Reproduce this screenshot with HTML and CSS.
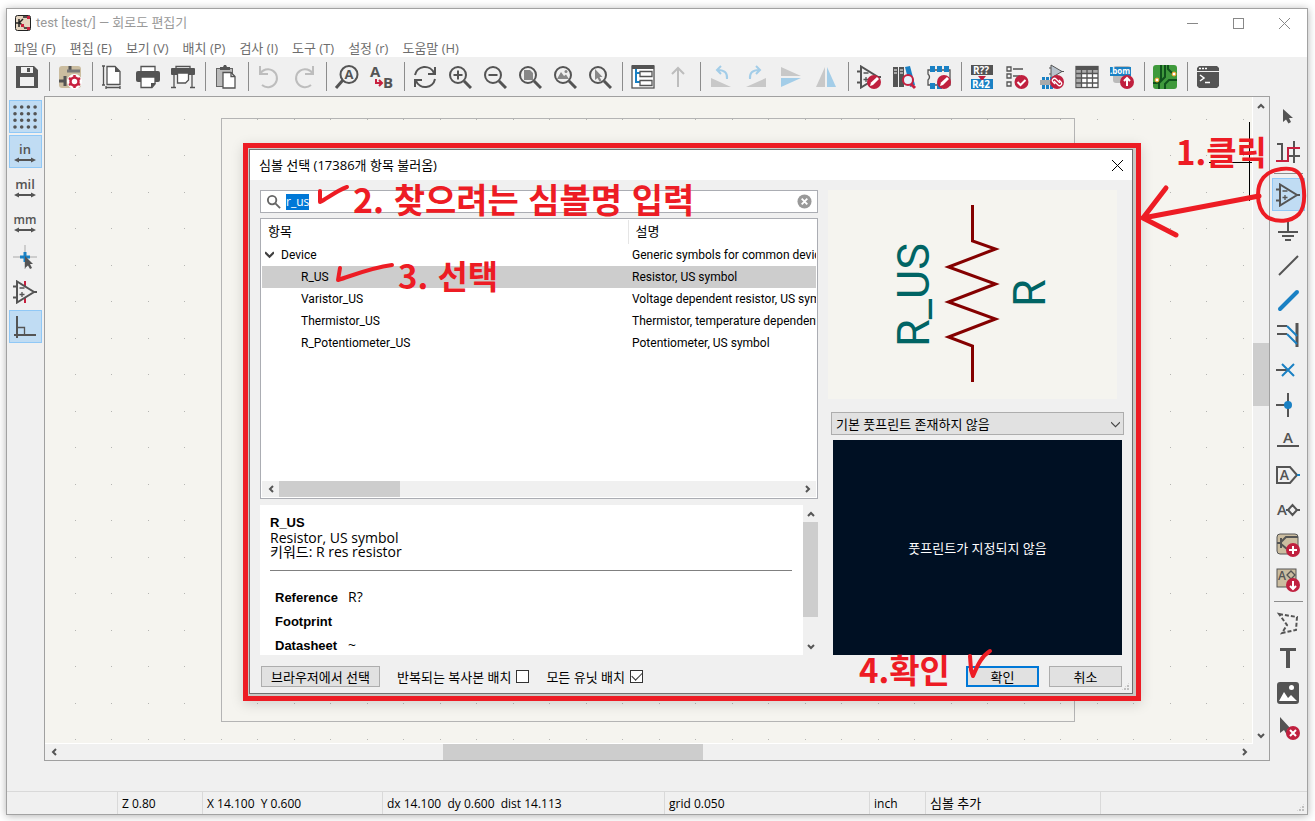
FILE: index.html
```html
<!DOCTYPE html>
<html lang="ko">
<head>
    <meta charset="UTF-8">
    <meta name="viewport" content="width=device-width, initial-scale=1.0">
    <title>test [test/] — 회로도 편집기</title>
    <link rel="stylesheet" href="styles.css">
</head>
<body>
    <!-- shared icon shapes -->
    <svg class="sprite" aria-hidden="true">
        <symbol id="lens" viewBox="0 0 24 24">
            <circle class="s2" cx="10" cy="10" r="8"/>
            <path class="s3" d="M16 16l7 7"/>
        </symbol>
        <symbol id="opamp" viewBox="0 0 24 24">
            <path class="s2" d="M4 1.5v21L21 12zM0 6.5h4M0 17.5h4M21 12h3"/>
            <path class="s1" d="M6.500 8h5M6.500 14.500h5M9 12v5"/>
        </symbol>
        <symbol id="units" viewBox="0 0 24 24">
            <path class="s2" d="M4 20h16"/>
            <path class="f" d="M1 20l5-2.500v5zM23 20l-5-2.500v5z"/>
        </symbol>
        <symbol id="pencil" viewBox="0 0 24 24">
            <circle class="red" cx="17" cy="17" r="7"/>
            <path fill="#fff" d="M13 21l1-3.500 6-5.500 2 2-6 6z"/>
        </symbol>
    </svg>

    <div class="window">
        <header class="titlebar">
            <svg class="app-icon" viewBox="0 0 16 16"><rect x=".5" y=".5" width="15" height="15" rx="2" fill="#e5d5c0" stroke="#222"/><path d="M4 4v8M1 8h3M4 8l4-4M5 8l4 4M8 2h5M9 13h4" stroke="#222" stroke-width="1.500" fill="none"/><path d="M12 1h3v3h-3zM12 12h3v3h-3zM6 9h3v3H6z" fill="#c8203f"/></svg>
            <span class="title">test [test/] — 회로도 편집기</span>
            <button class="win-btn" aria-label="최소화"><svg viewBox="0 0 11 11"><path d="M0 5.500h11"/></svg></button>
            <button class="win-btn" aria-label="최대화"><svg viewBox="0 0 11 11"><rect x=".5" y=".5" width="10" height="10"/></svg></button>
            <button class="win-btn" aria-label="닫기"><svg viewBox="0 0 11 11"><path d="M0 0l11 11M11 0L0 11"/></svg></button>
        </header>

        <nav class="menubar">
            <a href="#">파일 (F)</a>
            <a href="#">편집 (E)</a>
            <a href="#">보기 (V)</a>
            <a href="#">배치 (P)</a>
            <a href="#">검사 (I)</a>
            <a href="#">도구 (T)</a>
            <a href="#">설정 (r)</a>
            <a href="#">도움말 (H)</a>
        </nav>

        <div class="toolbar top">
            <button aria-label="저장"><svg viewBox="0 0 24 24"><path class="f" fill-rule="evenodd" d="M1 1h18l4 4v18H1zM6 2v6h12V2zM5 12v9h14v-9z"/><path class="f" d="M12 3h3v4h-3z"/></svg></button>
            <hr>
            <button aria-label="회로도 설정"><svg viewBox="0 0 24 24"><rect x="1" y="1" width="22" height="22" rx="3" fill="#cbbda0"/><path class="s3" d="M1 16h6M7 11v10M12 1v5"/><path d="M9 6h13" stroke="#777" stroke-width="3"/><circle cx="16.500" cy="16.500" r="5" fill="#fff" stroke="#fff" stroke-width="5"/><circle cx="16.500" cy="16.500" r="4" fill="none" stroke="#c8203f" stroke-width="2.500"/><path d="M16.500 10v3M16.500 20v3M11 13l2.500 2M19.500 18.500l2.500 1.500M11 20l2.500-1.500M19.500 15l2.500-2" stroke="#c8203f" stroke-width="2.500"/></svg></button>
            <hr>
            <button aria-label="페이지 설정"><svg viewBox="0 0 24 24"><path class="s1" d="M1 1h3M1 20h3M2.500 1v19M5 21v3M19 21v3M5 22.500h14"/><path class="s1 w" d="M6 1.500h8l5 5v13H6z"/><path class="f" d="M14 1v6h5z"/></svg></button>
            <button aria-label="인쇄"><svg viewBox="0 0 24 24"><path class="s1 w" d="M5 6V1.500h14V6"/><rect class="f" y="6" width="24" height="11" rx="2"/><path class="s1 w" d="M5 12h14v7l-3 3.500H5z"/><path class="f" d="M20 18l-5 5v-5z"/></svg></button>
            <button aria-label="플로팅"><svg viewBox="0 0 24 24"><path class="s1 w" d="M5 3V1.500h14V4"/><rect class="f" y="3" width="24" height="7" rx="1"/><path class="s1 w" d="M6.500 8h11v7l-3 3h-8z"/><path class="s1" d="M3 10v13M21 10v13M0 22.500h5M19 22.500h5"/></svg></button>
            <hr>
            <button aria-label="붙여넣기"><svg viewBox="0 0 24 24"><rect x="2.500" y="3.500" width="16" height="18" fill="#bbb" stroke="#666"/><path class="f" d="M6 2h3l1-2h2l1 2h3v3H6z"/><path class="s1 w" d="M9 7.500h8l4 4V23H9z"/><path class="s1" d="M17 7v4.500h4"/></svg></button>
            <hr>
            <button aria-label="실행 취소" disabled><svg viewBox="0 0 24 24"><path class="dim" d="M3 1v8h8M3 9a9 9 0 1 1 2 11"/></svg></button>
            <button aria-label="다시 실행" disabled><svg viewBox="0 0 24 24"><path class="dim" d="M21 1v8h-8M21 9a9 9 0 1 0-2 11"/></svg></button>
            <hr>
            <button aria-label="찾기"><svg viewBox="0 0 24 24"><circle class="s2" cx="14" cy="9.500" r="8.500"/><path class="s3" d="M8 15l-7 8"/><text x="9.500" y="14" class="ico-b" font-size="13">A</text></svg></button>
            <button aria-label="찾아 바꾸기"><svg viewBox="0 0 24 24"><text x="0" y="12" class="ico-b" font-size="15">A</text><text x="13" y="23" class="ico-b" font-size="15">B</text><path d="M6 14v4h6M9 15l3 3-3 3" fill="none" stroke="#c8203f" stroke-width="2"/></svg></button>
            <hr>
            <button aria-label="새로 고침"><svg viewBox="0 0 24 24"><path class="s2" d="M2 10a10 10 0 0 1 19-2M22 2v7h-7M22 14a10 10 0 0 1-19 2M2 22v-7h7"/></svg></button>
            <button aria-label="확대"><svg viewBox="0 0 24 24"><use href="#lens"/><path class="s2" d="M10 5.500v9M5.500 10h9"/></svg></button>
            <button aria-label="축소"><svg viewBox="0 0 24 24"><use href="#lens"/><path class="s2" d="M5.500 10h9"/></svg></button>
            <button aria-label="화면 맞춤"><svg viewBox="0 0 24 24"><use href="#lens"/><path fill="#888" d="M6 5h6l3 3v7H6z"/></svg></button>
            <button aria-label="개체 맞춤"><svg viewBox="0 0 24 24"><use href="#lens"/><path fill="#888" d="M4 14l4-7 3 4 2-1.500 3 4.500z"/><circle fill="#888" cx="13" cy="6.500" r="1.500"/></svg></button>
            <button aria-label="선택 영역 확대"><svg viewBox="0 0 24 24"><use href="#lens"/><path fill="#888" d="M7 4v11l2.500-2 2 3.500 2-1-2-3.500h3z"/></svg></button>
            <hr>
            <button aria-label="계층 탐색기"><svg viewBox="0 0 24 24"><rect class="s1 w" x="1" y="1" width="22" height="22"/><path class="f" d="M1 0h22v4H1z"/><path d="M5 4v13h4M5 8h4" fill="none" stroke="#1a81c4" stroke-width="2"/><path class="s1" d="M9 6.500h12v5H9zM9 15.500h12v5H9z"/></svg></button>
            <button aria-label="상위 시트" disabled><svg viewBox="0 0 24 24"><path class="dim" d="M12 22V3M6 9l6-6 6 6"/></svg></button>
            <hr>
            <button aria-label="반시계 방향 회전" disabled><svg viewBox="0 0 24 24"><path fill="#c8c8c8" d="M2 13v9h20z"/><path d="M18 14q1-9-9-9M12 1L8 5l4 4" fill="none" stroke="#a3cde8" stroke-width="2"/></svg></button>
            <button aria-label="시계 방향 회전" disabled><svg viewBox="0 0 24 24"><path fill="#c8c8c8" d="M22 13v9H2z"/><path d="M6 14Q5 5 15 5M12 1l4 4-4 4" fill="none" stroke="#a3cde8" stroke-width="2"/></svg></button>
            <button aria-label="상하 반전" disabled><svg viewBox="0 0 24 24"><path fill="#c8c8c8" d="M2 2v9h20z"/><path fill="#a3cde8" d="M2 22v-9h20z"/></svg></button>
            <button aria-label="좌우 반전" disabled><svg viewBox="0 0 24 24"><path fill="#c8c8c8" d="M2 22h9V2z"/><path fill="#a3cde8" d="M22 22h-9V2z"/></svg></button>
            <hr>
            <button aria-label="심볼 편집기"><svg viewBox="0 0 24 24"><use href="#opamp"/><use href="#pencil"/></svg></button>
            <button aria-label="심볼 탐색"><svg viewBox="0 0 24 24"><path class="f" d="M1 2h5v20H1zM7 2h5v20H7z"/><path d="M2 5h3M2 8h3M8 5h3M8 8h3" stroke="#fff"/><path d="M13 2l5-1 5 19-5 2z" fill="#1a81c4"/><circle cx="16" cy="15" r="5" fill="#e8f2fa" stroke="#c8203f" stroke-width="2"/><path d="M19 19l4 4" stroke="#c8203f" stroke-width="3"/></svg></button>
            <button aria-label="풋프린트 편집기"><svg viewBox="0 0 24 24"><path class="s1" d="M1 5v4q3 3 0 6v5h22V5z"/><path fill="#1a81c4" d="M3 1h5v6H3zM10 1h5v6h-5zM17 1h5v6h-5zM3 18h5v6H3zM10 18h5v6h-5z"/><use href="#pencil"/></svg></button>
            <hr>
            <button aria-label="주석 달기"><svg viewBox="0 0 24 24"><path class="f" d="M1 0h22v10H1z"/><path fill="#1a81c4" d="M1 14h22v10H1z"/><path class="red" d="M8 11h8l-4 5z"/><text x="3" y="9" class="ico-b white" font-size="10">R??</text><text x="2" y="23" class="ico-b white" font-size="10">R42</text></svg></button>
            <button aria-label="전기 규칙 검사"><svg viewBox="0 0 24 24"><path class="s1" d="M2 2h4v4H2zM2 9h4v4H2zM2 17h4v4H2zM8 4h10M8 11h7"/><circle class="red" cx="16.500" cy="17" r="7"/><path d="M12.500 17l3 3 5-5" fill="none" stroke="#fff" stroke-width="2"/></svg></button>
            <button aria-label="풋프린트 할당"><svg viewBox="0 0 24 24"><path d="M11 0v13l11-6.500z" fill="#b8c2cc" stroke="#545454"/><path d="M9 3h2M9 9h2M21 6.500h3" stroke="#545454"/><path fill="#1a81c4" d="M2 12h3v12H2zM6 12h3v12H6zM10 12h3v12h-3z"/><path fill="#aaa" d="M0 15h14v5H0z"/><circle class="red" cx="17" cy="17" r="7"/><path d="M15 19l-2-2a2 2 0 0 1 3-3l4 4M19 15l2 2a2 2 0 0 1-3 3l-4-4" fill="none" stroke="#fff" stroke-width="1.200"/></svg></button>
            <button aria-label="심볼 필드 편집"><svg viewBox="0 0 24 24"><rect class="s1 w" x="1" y="1.500" width="22" height="21"/><path class="f" d="M1 1h22v4H1z"/><path fill="#aaa" d="M2 5h20v3H2zM2 8h4v14H2z"/><path class="s1" d="M6.500 4v19M12 4v19M17.500 4v19M1 8.500h22M1 13h22M1 18h22"/></svg></button>
            <button aria-label="BOM 생성"><svg viewBox="0 0 24 24"><rect x="3" y="1" width="18" height="17" rx="3" fill="#bbb"/><path fill="#1a81c4" d="M0 2h21v9H0z"/><text x="0" y="9" class="ico-b white" font-size="8">.bom</text><circle class="red" cx="17" cy="17" r="7"/><path d="M17 21v-7M14 16l3-3 3 3" fill="none" stroke="#fff" stroke-width="2"/></svg></button>
            <hr>
            <button aria-label="PCB 편집기"><svg viewBox="0 0 24 24"><rect width="24" height="24" rx="3" fill="#3f9a3c"/><path d="M0 18h4l4-4V0M6 24v-6l6-6V0M12 24v-5l4-4h8M15 0v4l5 5" fill="none" stroke="#10521c" stroke-width="2"/><circle cx="4" cy="15" r="2" fill="#fff" stroke="#f2a01e"/><circle cx="21" cy="9" r="2" fill="#fff" stroke="#f2a01e"/></svg></button>
            <hr>
            <button aria-label="스크립트 콘솔"><svg viewBox="0 0 24 24"><path class="f" d="M3 1h18l2 2v3H1V3zM1 7h22v14l-2 2H3l-2-2z"/><path d="M3 3.500h2M6 3.500h2M9 3.500h2" stroke="#fff" stroke-width="1.500"/><path d="M4 10l4 3-4 3M9 17.500h5" fill="none" stroke="#fff" stroke-width="1.500"/></svg></button>
        </div>

        <main class="workspace">
            <div class="toolbar side">
                <button class="active" aria-label="격자 표시"><svg viewBox="0 0 24 24"><path d="M2 2h21M2 8.700h21M2 15.300h21M2 22h21" stroke="#545454" stroke-width="3.600" stroke-linecap="round" stroke-dasharray="0 6.700"/></svg></button>
                <button class="active" aria-label="인치"><svg viewBox="0 0 24 24"><text x="12" y="14" text-anchor="middle" class="ico" font-size="13">in</text><use href="#units"/></svg></button>
                <button aria-label="밀"><svg viewBox="0 0 24 24"><text x="12" y="14" text-anchor="middle" class="ico" font-size="13">mil</text><use href="#units"/></svg></button>
                <button aria-label="밀리미터"><svg viewBox="0 0 24 24"><text x="12" y="14" text-anchor="middle" class="ico" font-size="12">mm</text><use href="#units"/></svg></button>
                <button aria-label="전체 십자선"><svg viewBox="0 0 24 24"><path d="M0 12h24M12 0v24" stroke="#aaa"/><path d="M7 12h10M12 7v10" stroke="#1a81c4" stroke-width="3"/><path class="f" d="M12 11v12l3-2.500 2 3.500 2-1-2-4h3z"/></svg></button>
                <button aria-label="숨겨진 핀"><svg viewBox="0 0 24 24"><path d="M12 1v5M12 18v5" stroke="#c8203f" stroke-width="2"/><use href="#opamp"/></svg></button>
                <button class="active" aria-label="직각 모드"><svg viewBox="0 0 24 24"><path class="s2" d="M4 1v22M1 20h22"/><path class="s1" d="M4 12.500h7.500V20"/></svg></button>
            </div>

            <div class="canvas-frame">
                <div class="canvas">
                    <svg class="sheet" width="100%" height="100%">
                        <defs>
                            <pattern id="grid" x="30" y="22" width="73" height="73" patternUnits="userSpaceOnUse">
                                <path d="M0 0h1v1H0zM36 0h1v1h-1zM0 36h1v1H0zM36 36h1v1h-1z" fill="#b5b5b2"/>
                            </pattern>
                        </defs>
                        <rect width="100%" height="100%" fill="url(#grid)"/>
                        <rect x="176.500" y="21.500" width="853" height="603" fill="none" stroke="#b4b4b4"/>
                        <path d="M1204.500 25v79M1164 65.500h43" stroke="#000"/>
                    </svg>
                </div>
                <div class="scroll vertical">
                    <button aria-label="위로"><svg viewBox="0 0 8 8"><path d="M1 6l3-3 3 3"/></svg></button>
                    <div class="track"><div class="thumb"></div></div>
                    <button aria-label="아래로"><svg viewBox="0 0 8 8"><path d="M1 2l3 3 3-3"/></svg></button>
                </div>
                <div class="scroll horizontal">
                    <button aria-label="왼쪽"><svg viewBox="0 0 8 8"><path d="M6 1L3 4l3 3"/></svg></button>
                    <div class="track"><div class="thumb"></div></div>
                    <button aria-label="오른쪽"><svg viewBox="0 0 8 8"><path d="M2 1l3 3-3 3"/></svg></button>
                </div>
            </div>

            <div class="toolbar side">
                <button aria-label="선택"><svg viewBox="0 0 24 24"><path class="f" d="M7 4v13l3-2.500 2.500 4 2.500-1.500-2-4h4z"/></svg></button>
                <button aria-label="네트 강조"><svg viewBox="0 0 24 24"><path class="s2" d="M1 4h5v17M12 16h12M18 1v22"/><path d="M0 21h12V8h12" fill="none" stroke="#c8203f" stroke-width="2"/></svg></button>
                <hr>
                <button class="active" aria-label="심볼 추가"><svg viewBox="0 0 24 24"><use href="#opamp"/></svg></button>
                <button aria-label="전원 추가"><svg viewBox="0 0 24 24"><path class="s2" d="M12 4v10M2 14h20M6 18h12M9 22h6"/></svg></button>
                <button aria-label="배선"><svg viewBox="0 0 24 24"><path class="s2" d="M3 22L22 3"/></svg></button>
                <button aria-label="버스"><svg viewBox="0 0 24 24"><path d="M4 21L21 4" stroke="#1a81c4" stroke-width="4" stroke-linecap="round"/></svg></button>
                <button aria-label="버스 입구"><svg viewBox="0 0 24 24"><path class="s2" d="M1 3h10M1 11h10"/><path class="s3" d="M21 0v24"/><path d="M11 3l10 10M11 11l10 10" stroke="#1a81c4" stroke-width="2"/></svg></button>
                <button aria-label="연결 없음"><svg viewBox="0 0 24 24"><path class="s2" d="M0 12h12"/><path d="M6 6l12 12M18 6L6 18" stroke="#1a81c4" stroke-width="2"/></svg></button>
                <button aria-label="접점"><svg viewBox="0 0 24 24"><path class="s2" d="M0 12h12M12 0v24"/><circle cx="12" cy="12" r="4" fill="#1a81c4"/></svg></button>
                <button aria-label="레이블"><svg viewBox="0 0 24 24"><text x="12" y="15" text-anchor="middle" class="ico" font-size="15">A</text><path class="s2" d="M1 18h22"/></svg></button>
                <button aria-label="전역 레이블"><svg viewBox="0 0 24 24"><path class="s2" d="M1 4h13l7 8-7 8H1z"/><path d="M21 12h3" stroke="#1a81c4" stroke-width="2"/><text x="8.500" y="17" text-anchor="middle" class="ico" font-size="14">A</text></svg></button>
                <button aria-label="계층 레이블"><svg viewBox="0 0 24 24"><text x="6" y="17" text-anchor="middle" class="ico" font-size="15">A</text><path class="s2" d="M12 12l4.500-5 4.500 5-4.500 5zM21 12h3M10 12h2"/></svg></button>
                <button aria-label="시트 추가"><svg viewBox="0 0 24 24"><rect x="1" y="1" width="21" height="20" rx="3" fill="#cbbda0" stroke="#545454"/><path class="s2" d="M1 10h4M5 5v10M5 9l5-5h12M5 11l6 5"/><circle class="red" cx="17" cy="17" r="7"/><path d="M17 13v8M13 17h8" stroke="#fff" stroke-width="2"/></svg></button>
                <button aria-label="시트 핀 가져오기"><svg viewBox="0 0 24 24"><rect x="1" y="1" width="19" height="18" fill="#cbbda0" stroke="#545454"/><text x="2" y="12" class="ico" font-size="12">A</text><path class="s1" d="M11 7l4-4 4 4-4 4z"/><circle class="red" cx="17" cy="17" r="7"/><path d="M17 13v7M14 18l3 3 3-3" fill="none" stroke="#fff" stroke-width="2"/></svg></button>
                <hr>
                <button aria-label="도형 선"><svg viewBox="0 0 24 24"><path d="M3 3l18 3-1 13-14 3 5-8z" fill="none" stroke="#545454" stroke-width="2" stroke-dasharray="4 2"/></svg></button>
                <button aria-label="텍스트"><svg viewBox="0 0 24 24"><path class="f" d="M4 2h16v3h-6v17h-4V5H4z"/></svg></button>
                <button aria-label="이미지"><svg viewBox="0 0 24 24"><rect class="f" x="1" y="1" width="22" height="22" rx="3"/><path fill="#fff" d="M3 20l5-9 4 6 3-3 6 6z"/><circle fill="#fff" cx="15.500" cy="6.500" r="2.500"/></svg></button>
                <button aria-label="삭제"><svg viewBox="0 0 24 24"><path class="f" d="M4 1v16l4-3 3 5 2-2-2-4h4z"/><circle class="red" cx="17" cy="17" r="7"/><path d="M14 14l6 6M20 14l-6 6" stroke="#fff" stroke-width="2"/></svg></button>
            </div>
        </main>

        <div class="message-panel"></div>

        <footer class="statusbar">
            <span class="f-blank"></span>
            <span class="f-zoom">Z 0.80</span>
            <span class="f-pos">X 14.100&nbsp; Y 0.600</span>
            <span class="f-delta">dx 14.100&nbsp; dy 0.600&nbsp; dist 14.113</span>
            <span class="f-grid">grid 0.050</span>
            <span class="f-unit">inch</span>
            <span class="f-tool">심볼 추가</span>
            <span class="f-rest"></span>
            <i class="grip"></i>
        </footer>
    </div>

    <div class="dialog-mark">
        <section class="dialog" role="dialog" aria-labelledby="dlg-title">
            <header class="dialog-title">
                <h1 id="dlg-title">심볼 선택 (17386개 항목 불러옴)</h1>
                <button aria-label="닫기"><svg viewBox="0 0 11 11"><path d="M0 0l11 11M11 0L0 11"/></svg></button>
            </header>

            <div class="dialog-body">
                <div class="left">
                    <div class="search">
                        <svg viewBox="0 0 16 16"><circle cx="6.500" cy="6.500" r="4.500"/><path d="M10 10l5 5"/></svg>
                        <input type="text" id="filter" value="r_us" aria-label="검색">
                        <button aria-label="지우기"><svg viewBox="0 0 16 16"><circle cx="8" cy="8" r="7.500"/><path d="M5 5l6 6M11 5l-6 6"/></svg></button>
                    </div>

                    <div class="tree">
                        <table>
                            <colgroup><col class="c-name"><col></colgroup>
                            <thead>
                                <tr><th>항목</th><th>설명</th></tr>
                            </thead>
                            <tbody>
                                <tr><td class="lib"><svg viewBox="0 0 8 8"><path d="M0 2l4 4 4-4"/></svg>Device</td><td>Generic symbols for common devices</td></tr>
                                <tr class="selected"><td>R_US</td><td>Resistor, US symbol</td></tr>
                                <tr><td>Varistor_US</td><td>Voltage dependent resistor, US symbol</td></tr>
                                <tr><td>Thermistor_US</td><td>Thermistor, temperature dependent resistor</td></tr>
                                <tr><td>R_Potentiometer_US</td><td>Potentiometer, US symbol</td></tr>
                            </tbody>
                        </table>
                        <div class="scroll horizontal">
                            <button aria-label="왼쪽"><svg viewBox="0 0 8 8"><path d="M6 1L3 4l3 3"/></svg></button>
                            <div class="track"><div class="thumb"></div></div>
                            <button aria-label="오른쪽"><svg viewBox="0 0 8 8"><path d="M2 1l3 3-3 3"/></svg></button>
                        </div>
                    </div>

                    <div class="details">
                        <div class="details-text">
                            <h2>R_US</h2>
                            <p>Resistor, US symbol</p>
                            <p>키워드: R res resistor</p>
                            <dl>
                                <dt>Reference</dt><dd>R?</dd>
                                <dt>Footprint</dt><dd></dd>
                                <dt>Datasheet</dt><dd>~</dd>
                            </dl>
                        </div>
                        <div class="scroll vertical">
                            <button aria-label="위로"><svg viewBox="0 0 8 8"><path d="M1 6l3-3 3 3"/></svg></button>
                            <div class="track"><div class="thumb"></div></div>
                            <button aria-label="아래로"><svg viewBox="0 0 8 8"><path d="M1 2l3 3 3-3"/></svg></button>
                        </div>
                    </div>
                </div>

                <div class="right">
                    <svg class="preview" viewBox="0 0 289 209">
                        <path d="M144.500 15v36l23 8-47 18 47 17-47 18 47 17-47 18 24 9v36" fill="none" stroke="#840000" stroke-width="3"/>
                        <text transform="translate(101 157) rotate(-90)">R_US</text>
                        <text transform="translate(217 117) rotate(-90)">R</text>
                    </svg>
                    <div class="select-wrap">
                        <select aria-label="풋프린트"><option>기본 풋프린트 존재하지 않음</option></select>
                        <svg viewBox="0 0 8 8"><path d="M0 2l4 4 4-4"/></svg>
                    </div>
                    <div class="footprint">풋프린트가 지정되지 않음</div>
                </div>
            </div>

            <footer class="dialog-foot">
                <button class="btn browse">브라우저에서 선택</button>
                <label>반복되는 복사본 배치<input type="checkbox"></label>
                <label>모든 유닛 배치<input type="checkbox" checked></label>
                <span class="spacer"></span>
                <button class="btn primary">확인</button>
                <button class="btn">취소</button>
            </footer>
            <i class="grip"></i>
        </section>
    </div>

    <!-- hand-drawn notes on top of everything -->
    <svg class="notes" width="1315" height="821">
        <g fill="none" stroke="#ed1c24" stroke-width="5" stroke-linecap="round" stroke-linejoin="round">
            <path d="M1259 196L1143 218M1166 188l-23 30 33 17"/>
            <path stroke-width="4" d="M1258 195c0-14 7-24 23-26 15-2 20 4 22 14 2 12 2 24-4 31-8 8-22 9-32 3-6-5-9-12-9-22z"/>
            <path stroke-width="4" d="M320 191v11c8-4 16-11 27-15"/>
            <path stroke-width="4" d="M340 268l-2 12c16-5 32-12 54-15"/>
            <path stroke-width="4" d="M970 656l1 14 2 6c5-12 9-20 17-25"/>
        </g>
        <text x="1176" y="165">1.클릭</text>
        <text class="wide" x="353" y="213">2. 찾으려는 심볼명 입력</text>
        <text x="398" y="289">3. 선택</text>
        <text x="859" y="683">4.확인</text>
    </svg>

    <script>
        document.getElementById('filter').select();
    </script>
</body>
</html>
```
FILE: styles.css
```css
* {
    box-sizing: border-box;
}

body {
    margin: 0;
    height: 100vh;
    min-height: 720px;
    display: flex;
    position: relative;
    overflow: hidden;
    background: #fff;
    color: #000;
    font-family: "Open Sans", "Noto Sans CJK KR", sans-serif;
    font-size: 12px;
    line-height: 16px;
}

button, input, select {
    font: inherit;
    color: inherit;
    margin: 0;
    padding: 0;
    border: 0;
    background: none;
}

svg {
    display: block;
}

.sprite {
    position: absolute;
    width: 0;
    height: 0;
}

/* icon strokes */
.s1, .s2, .s3 {
    fill: none;
    stroke: #545454;
    stroke-width: 1px;
}

.s1 { stroke-width: 1.3px; }
.s2 { stroke-width: 2px; }
.s3 { stroke-width: 3px; }
.f { fill: #545454; }
.w { fill: #fff; }
.red { fill: #c0203f; }

.dim {
    fill: none;
    stroke: #bdbdbd;
    stroke-width: 2px;
}

.ico, .ico-b {
    fill: #545454;
    font-family: "Open Sans", sans-serif;
    font-weight: 600;
}

.ico-b { font-weight: 700; }
.white { fill: #fff; }

/* main window */
.window {
    flex: 1;
    margin: 8px 7px 6px 6px;
    display: flex;
    flex-direction: column;
    background: #f0f0f0;
    border: 1px solid #a2a2a2;
    box-shadow: 0 1px 8px rgba(0, 0, 0, 0.3);
    min-width: 0;
}

.titlebar {
    display: flex;
    align-items: center;
    height: 28px;
    padding-left: 8px;
    background: #fff;
    color: #999;
}

.app-icon {
    width: 16px;
    height: 16px;
}

.title {
    flex: 1;
    margin-left: 5px;
    font-family: Roboto, "Noto Sans CJK KR", sans-serif;
    font-size: 13px;
}

.win-btn {
    width: 46px;
    height: 28px;
    display: grid;
    place-items: center;
}

.win-btn svg, .dialog-title svg {
    width: 11px;
    height: 11px;
    fill: none;
    stroke: #888;
}

.menubar {
    display: flex;
    height: 20px;
    padding-left: 7px;
    gap: 14px;
    background: #fff;
}

.menubar a {
    color: #6d6d6d;
    font-size: 13px;
    text-decoration: none;
    line-height: 22px;
}

.toolbar button {
    width: 33px;
    height: 33px;
    margin: 1px;
    padding-right: 1px;
    border: 1px solid transparent;
    display: grid;
    place-items: center;
    flex: none;
}

.toolbar svg {
    width: 24px;
    height: 24px;
    overflow: visible;
}

.toolbar button.active {
    background: #c0dcf3;
    border-color: #90c8f6;
}

.toolbar hr {
    margin: 0;
    border: 0;
    background: #8c8c8c;
    flex: none;
}

.toolbar.top {
    display: flex;
    align-items: center;
    height: 39px;
    padding-left: 3px;
}

.toolbar.top hr {
    width: 1px;
    height: 29px;
    margin: 0 3px 0 4px;
}

.workspace {
    flex: 1;
    display: flex;
    min-height: 0;
}

.toolbar.side {
    display: flex;
    flex-direction: column;
    width: 37px;
    padding: 3px 1px;
    overflow: hidden;
}

.toolbar.side hr {
    height: 1px;
    margin: 4px 3px 3px;
}

.canvas-frame {
    flex: 1;
    min-width: 0;
    display: grid;
    grid-template-columns: 1fr 16px;
    grid-template-rows: 1fr 16px;
    border: 1px solid #a0a0a0;
}

.canvas {
    background: #f5f4ef;
    border-right: 1px solid #fff;
    border-bottom: 1px solid #fff;
    overflow: hidden;
    min-width: 0;
    min-height: 0;
}

/* scroll bars */
.scroll {
    display: flex;
    background: #f0f0f0;
}

.scroll.vertical {
    flex-direction: column;
}

.scroll button {
    width: 17px;
    height: 17px;
    display: grid;
    place-items: center;
    flex: none;
}

.scroll svg {
    width: 8px;
    height: 8px;
    fill: none;
    stroke: #555;
    stroke-width: 2px;
}

.track {
    flex: 1;
    display: flex;
    flex-direction: inherit;
}

.vertical > button { width: 16px; }
.horizontal > button { height: 16px; }

.thumb {
    background: #cdcdcd;
}

.canvas-frame .vertical .track { padding-top: 229px; }
.canvas-frame .vertical .thumb { height: 63px; }
.canvas-frame .horizontal .track { padding-left: 381px; }
.canvas-frame .horizontal .thumb { width: 260px; }

.message-panel {
    height: 31px;
    border-bottom: 1px solid #d9d9d9;
}

.statusbar {
    display: flex;
    height: 22px;
    position: relative;
}

.statusbar span {
    padding-left: 4px;
    line-height: 23px;
    border-right: 1px solid #d9d9d9;
    white-space: nowrap;
}

.f-blank { width: 111px; }
.f-zoom { width: 85px; }
.f-pos { width: 180px; }
.f-delta { width: 282px; }
.f-grid { width: 205px; }
.f-unit { width: 56px; }
.f-tool { width: 175px; font-size: 13px; }
.statusbar .f-rest { border: 0; }

.grip {
    position: absolute;
    right: 2px;
    bottom: 2px;
    width: 9px;
    height: 9px;
    background: conic-gradient(at 2px 2px, transparent 75%, #bfbfbf 0) 0 0 / 3px 3px;
    clip-path: polygon(100% 0, 100% 100%, 0 100%);
}

/* symbol chooser */
.dialog-mark {
    position: absolute;
    left: 243px;
    top: 143px;
    padding: 1px 3px 2px 1px;
    border: 5px solid #ed1c24;
    background: #c9c8c4;
    box-shadow: 0 3px 12px rgba(0, 0, 0, 0.15);
}

.dialog {
    position: relative;
    width: 884px;
    background: #f0f0f0;
    border: 1px solid #707070;
}

.dialog-title {
    height: 30px;
    display: flex;
    align-items: center;
    justify-content: space-between;
    padding: 0 9px;
    background: #fff;
}

.dialog-title h1 {
    margin: 0;
    font-size: 13px;
    font-weight: 400;
}

.dialog-title svg {
    stroke: #000;
}

.dialog-body {
    display: flex;
    gap: 10px;
    padding: 10px 8px 0 10px;
}

.left {
    width: 558px;
}

.search {
    display: flex;
    align-items: center;
    height: 23px;
    padding: 0 5px;
    background: #fff;
    border: 1px solid #abadb3;
}

.search svg {
    width: 15px;
    height: 15px;
    fill: none;
    stroke: #666;
    stroke-width: 2px;
}

.search input {
    flex: 1;
    margin-left: 5px;
    height: 16px;
    outline: 0;
}

.search input::selection {
    background: #0078d7;
    color: #fff;
}

.search button circle {
    fill: #999;
    stroke: none;
}

.search button path {
    stroke: #fff;
}

.tree {
    height: 281px;
    margin-top: 5px;
    padding: 1px;
    display: flex;
    flex-direction: column;
    justify-content: space-between;
    background: #fff;
    border: 1px solid #abadb3;
}

.tree table {
    width: 100%;
    table-layout: fixed;
    border-collapse: collapse;
    font-family: Roboto, "Noto Sans CJK KR", sans-serif;
}

.c-name {
    width: 366px;
}

.tree th {
    height: 24px;
    padding: 0 6px;
    font-size: 13px;
    font-weight: 400;
    text-align: left;
}

.tree th + th {
    padding-left: 7px;
    border-left: 1px solid #e5e5e5;
}

.tree td {
    height: 22px;
    padding: 0 0 0 39px;
    white-space: nowrap;
    overflow: hidden;
}

.tree td + td {
    padding-left: 4px;
}

.tree td.lib {
    padding-left: 3px;
}

.lib svg {
    display: inline-block;
    width: 9px;
    height: 9px;
    margin-right: 7px;
    fill: none;
    stroke: #404040;
    stroke-width: 2px;
}

.tree .selected {
    background: #cdcdcd;
}

.tree .horizontal .thumb {
    width: 121px;
}

.details {
    display: flex;
    height: 150px;
    margin-top: 6px;
    background: #fff;
}

.details-text {
    flex: 1;
    padding: 10px 11px 0 10px;
    overflow: hidden;
    font-size: 14px;
    line-height: 14px;
}

.details h2, .details dt {
    margin: 0;
    font: 700 13px/16px "Liberation Sans", sans-serif;
}

.details p {
    margin: 0;
}

.details dl {
    display: grid;
    grid-template-columns: 65px 1fr;
    column-gap: 8px;
    row-gap: 8px;
    margin: 11px 0 0;
    padding: 19px 5px 0;
    border-top: 1px solid #808080;
}

.details dd {
    margin: 0;
}

.details .vertical,
.details .vertical button {
    width: 15px;
}

.details .thumb {
    height: 95px;
}

.right {
    flex: 1;
    display: flex;
    flex-direction: column;
}

.preview {
    width: 289px;
    height: 209px;
    background: #f5f4ef;
}

.preview text {
    font-family: Roboto, sans-serif;
    font-size: 45px;
    fill: #006464;
}

.select-wrap {
    position: relative;
    margin: 13px 0 5px 3px;
}

.select-wrap select {
    display: block;
    width: 100%;
    height: 23px;
    padding-left: 4px;
    appearance: none;
    background: #e1e1e1;
    border: 1px solid #adadad;
    font-size: 13px;
}

.select-wrap svg {
    position: absolute;
    right: 4px;
    top: 8px;
    width: 9px;
    height: 9px;
    fill: none;
    stroke: #444;
    pointer-events: none;
}

.footprint {
    flex: 1;
    margin: 0 2px 0 5px;
    display: grid;
    place-items: center;
    background: #001023;
    color: #fff;
    font-size: 13px;
}

.dialog-foot {
    display: flex;
    align-items: center;
    padding: 11px 10px 6px 11px;
    font-size: 13px;
}

.btn {
    width: 73px;
    height: 21px;
    margin-left: 10px;
    background: #e1e1e1;
    border: 1px solid #adadad;
    line-height: 16px;
}

.btn.browse {
    width: 119px;
    margin: 0;
}

.btn.primary {
    border: 2px solid #0078d7;
}

.dialog-foot label {
    display: flex;
    align-items: center;
    gap: 5px;
    margin-left: 17px;
}

.dialog-foot input {
    width: 13px;
    height: 13px;
    appearance: none;
    background: #fff;
    border: 1px solid #333;
}

.dialog-foot input:checked::after {
    content: "";
    display: block;
    width: 9px;
    height: 5px;
    margin: 1px;
    border-left: 1px solid #333;
    border-bottom: 1px solid #333;
    transform: rotate(-45deg);
}

.spacer {
    flex: 1;
}

.notes {
    position: absolute;
    left: 0;
    top: 0;
    pointer-events: none;
}

.notes text {
    fill: #ed1c24;
    font-family: "Noto Sans CJK KR", sans-serif;
    font-size: 33px;
    font-weight: 700;
}

.notes .wide {
    font-size: 34px;
}
```
